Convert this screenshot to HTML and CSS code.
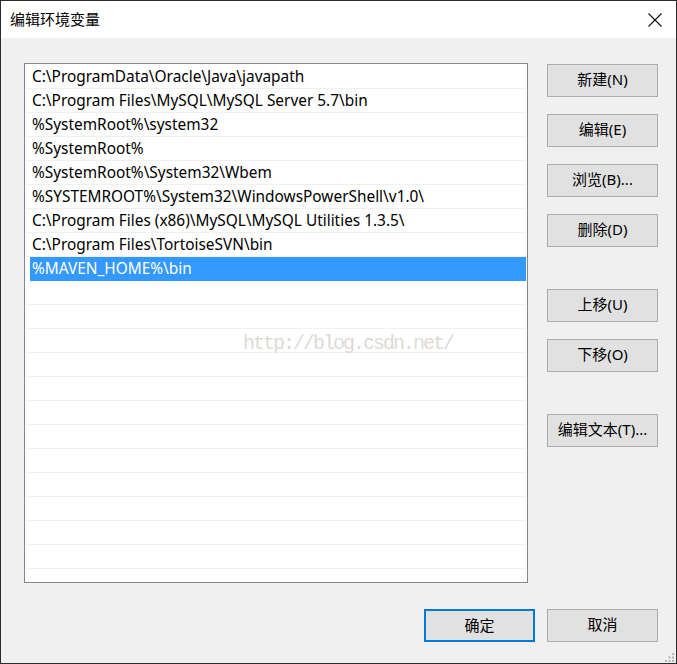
FILE: index.html
```html
<!DOCTYPE html>
<html lang="zh-CN">
<head>
<meta charset="utf-8">
<title>编辑环境变量</title>
<link rel="stylesheet" href="styles.css">
</head>
<body>
<div class="window">
  <div class="titlebar">
    <span class="title">编辑环境变量</span>
    <svg class="close" width="14" height="14" viewBox="0 0 14 14"><path d="M0.5 0.5 L13.5 13.5 M13.5 0.5 L0.5 13.5" stroke="#111" stroke-width="1.1" fill="none"/></svg>
  </div>
  <div class="content">
    <div class="main">
      <div class="list">
        <div class="row">C:\ProgramData\Oracle\Java\javapath</div>
        <div class="row">C:\Program Files\MySQL\MySQL Server 5.7\bin</div>
        <div class="row">%SystemRoot%\system32</div>
        <div class="row">%SystemRoot%</div>
        <div class="row">%SystemRoot%\System32\Wbem</div>
        <div class="row">%SYSTEMROOT%\System32\WindowsPowerShell\v1.0\</div>
        <div class="row">C:\Program Files (x86)\MySQL\MySQL Utilities 1.3.5\</div>
        <div class="row">C:\Program Files\TortoiseSVN\bin</div>
        <div class="row selected">%MAVEN_HOME%\bin</div>
        <div class="row"></div>
        <div class="row"></div>
        <div class="row"></div>
        <div class="row"></div>
        <div class="row"></div>
        <div class="row"></div>
        <div class="row"></div>
        <div class="row"></div>
        <div class="row"></div>
        <div class="row"></div>
        <div class="row"></div>
        <div class="row"></div>
        <div class="row"></div>
        <div class="watermark">http://blog.csdn.net/</div>
      </div>
      <div class="side">
        <div class="group">
          <button class="btn">新建(N)</button>
          <button class="btn">编辑(E)</button>
          <button class="btn">浏览(B)...</button>
          <button class="btn">删除(D)</button>
        </div>
        <div class="group">
          <button class="btn">上移(U)</button>
          <button class="btn">下移(O)</button>
        </div>
        <div class="group">
          <button class="btn">编辑文本(T)...</button>
        </div>
      </div>
    </div>
    <div class="footer">
      <button class="btn default">确定</button>
      <button class="btn">取消</button>
    </div>
    <svg class="grip" width="10" height="10" viewBox="0 0 10 10">
      <rect x="7" y="0" width="2" height="2" fill="#b4b4b4"/>
      <rect x="3.5" y="3.5" width="2" height="2" fill="#b4b4b4"/>
      <rect x="7" y="3.5" width="2" height="2" fill="#b4b4b4"/>
      <rect x="0" y="7" width="2" height="2" fill="#b4b4b4"/>
      <rect x="3.5" y="7" width="2" height="2" fill="#b4b4b4"/>
      <rect x="7" y="7" width="2" height="2" fill="#b4b4b4"/>
    </svg>
  </div>
</div>
</body>
</html>
```
FILE: styles.css
```css
* { box-sizing: border-box; }
html, body { margin: 0; padding: 0; background: #fff; }
body {
  font-family: "Noto Sans", "Noto Sans CJK SC", sans-serif;
  font-size: 15px;
  color: #000;
}
.window {
  width: 677px;
  height: 664px;
  border: 1px solid #2b2b2b;
  display: flex;
  flex-direction: column;
  background: #f0f0f0;
}
.titlebar {
  height: 37px;
  flex: none;
  background: #fff;
  display: flex;
  align-items: center;
  justify-content: space-between;
  padding: 0 14px 0 9px;
}
.title {
  font-family: "Noto Sans CJK SC", sans-serif;
  font-size: 15px;
  color: #000;
  position: relative;
  top: -1px;
}
.close { display: block; }
.content {
  flex: 1;
  position: relative;
  padding: 25px 18px 0 23px;
  display: flex;
  flex-direction: column;
}
.main {
  display: flex;
  gap: 19px;
  height: 520px;
  flex: none;
}
.list {
  position: relative;
  width: 504px;
  height: 520px;
  flex: none;
  background: #fff;
  border: 1px solid #828790;
  padding: 1px 1px 0 1px;
  overflow: hidden;
}
.row {
  height: 24px;
  border-bottom: 1px solid #f0f0f0;
  padding: 1px 0 0 6px;
  line-height: 22px;
  white-space: nowrap;
  font-size: 15.4px;
}
.row.selected {
  background: linear-gradient(to right, transparent 4px, #3399ff 4px);
  border-bottom-color: transparent;
  color: #fff;
}
.watermark {
  position: absolute;
  left: 218px;
  top: 268px;
  font-family: "Liberation Mono", monospace;
  font-size: 20px;
  letter-spacing: -2px;
  color: #dedad5;
  white-space: nowrap;
  pointer-events: none;
}
.side {
  width: 111px;
  padding-top: 1px;
  display: flex;
  flex-direction: column;
  gap: 42px;
}
.group {
  display: flex;
  flex-direction: column;
  gap: 17px;
}
.btn {
  width: 111px;
  height: 33px;
  background: #e1e1e1;
  border: 1px solid #adadad;
  font-family: "Noto Sans", "Noto Sans CJK SC", sans-serif;
  font-size: 15px;
  line-height: 29px;
  color: #000;
  padding: 0 0 2px 0;
  margin: 0;
}
.footer {
  display: flex;
  justify-content: flex-end;
  gap: 12px;
  margin-top: 26px;
}
.btn.default {
  border: 2px solid #0078d7;
}
.grip {
  position: absolute;
  right: 1px;
  bottom: 0px;
}
```
